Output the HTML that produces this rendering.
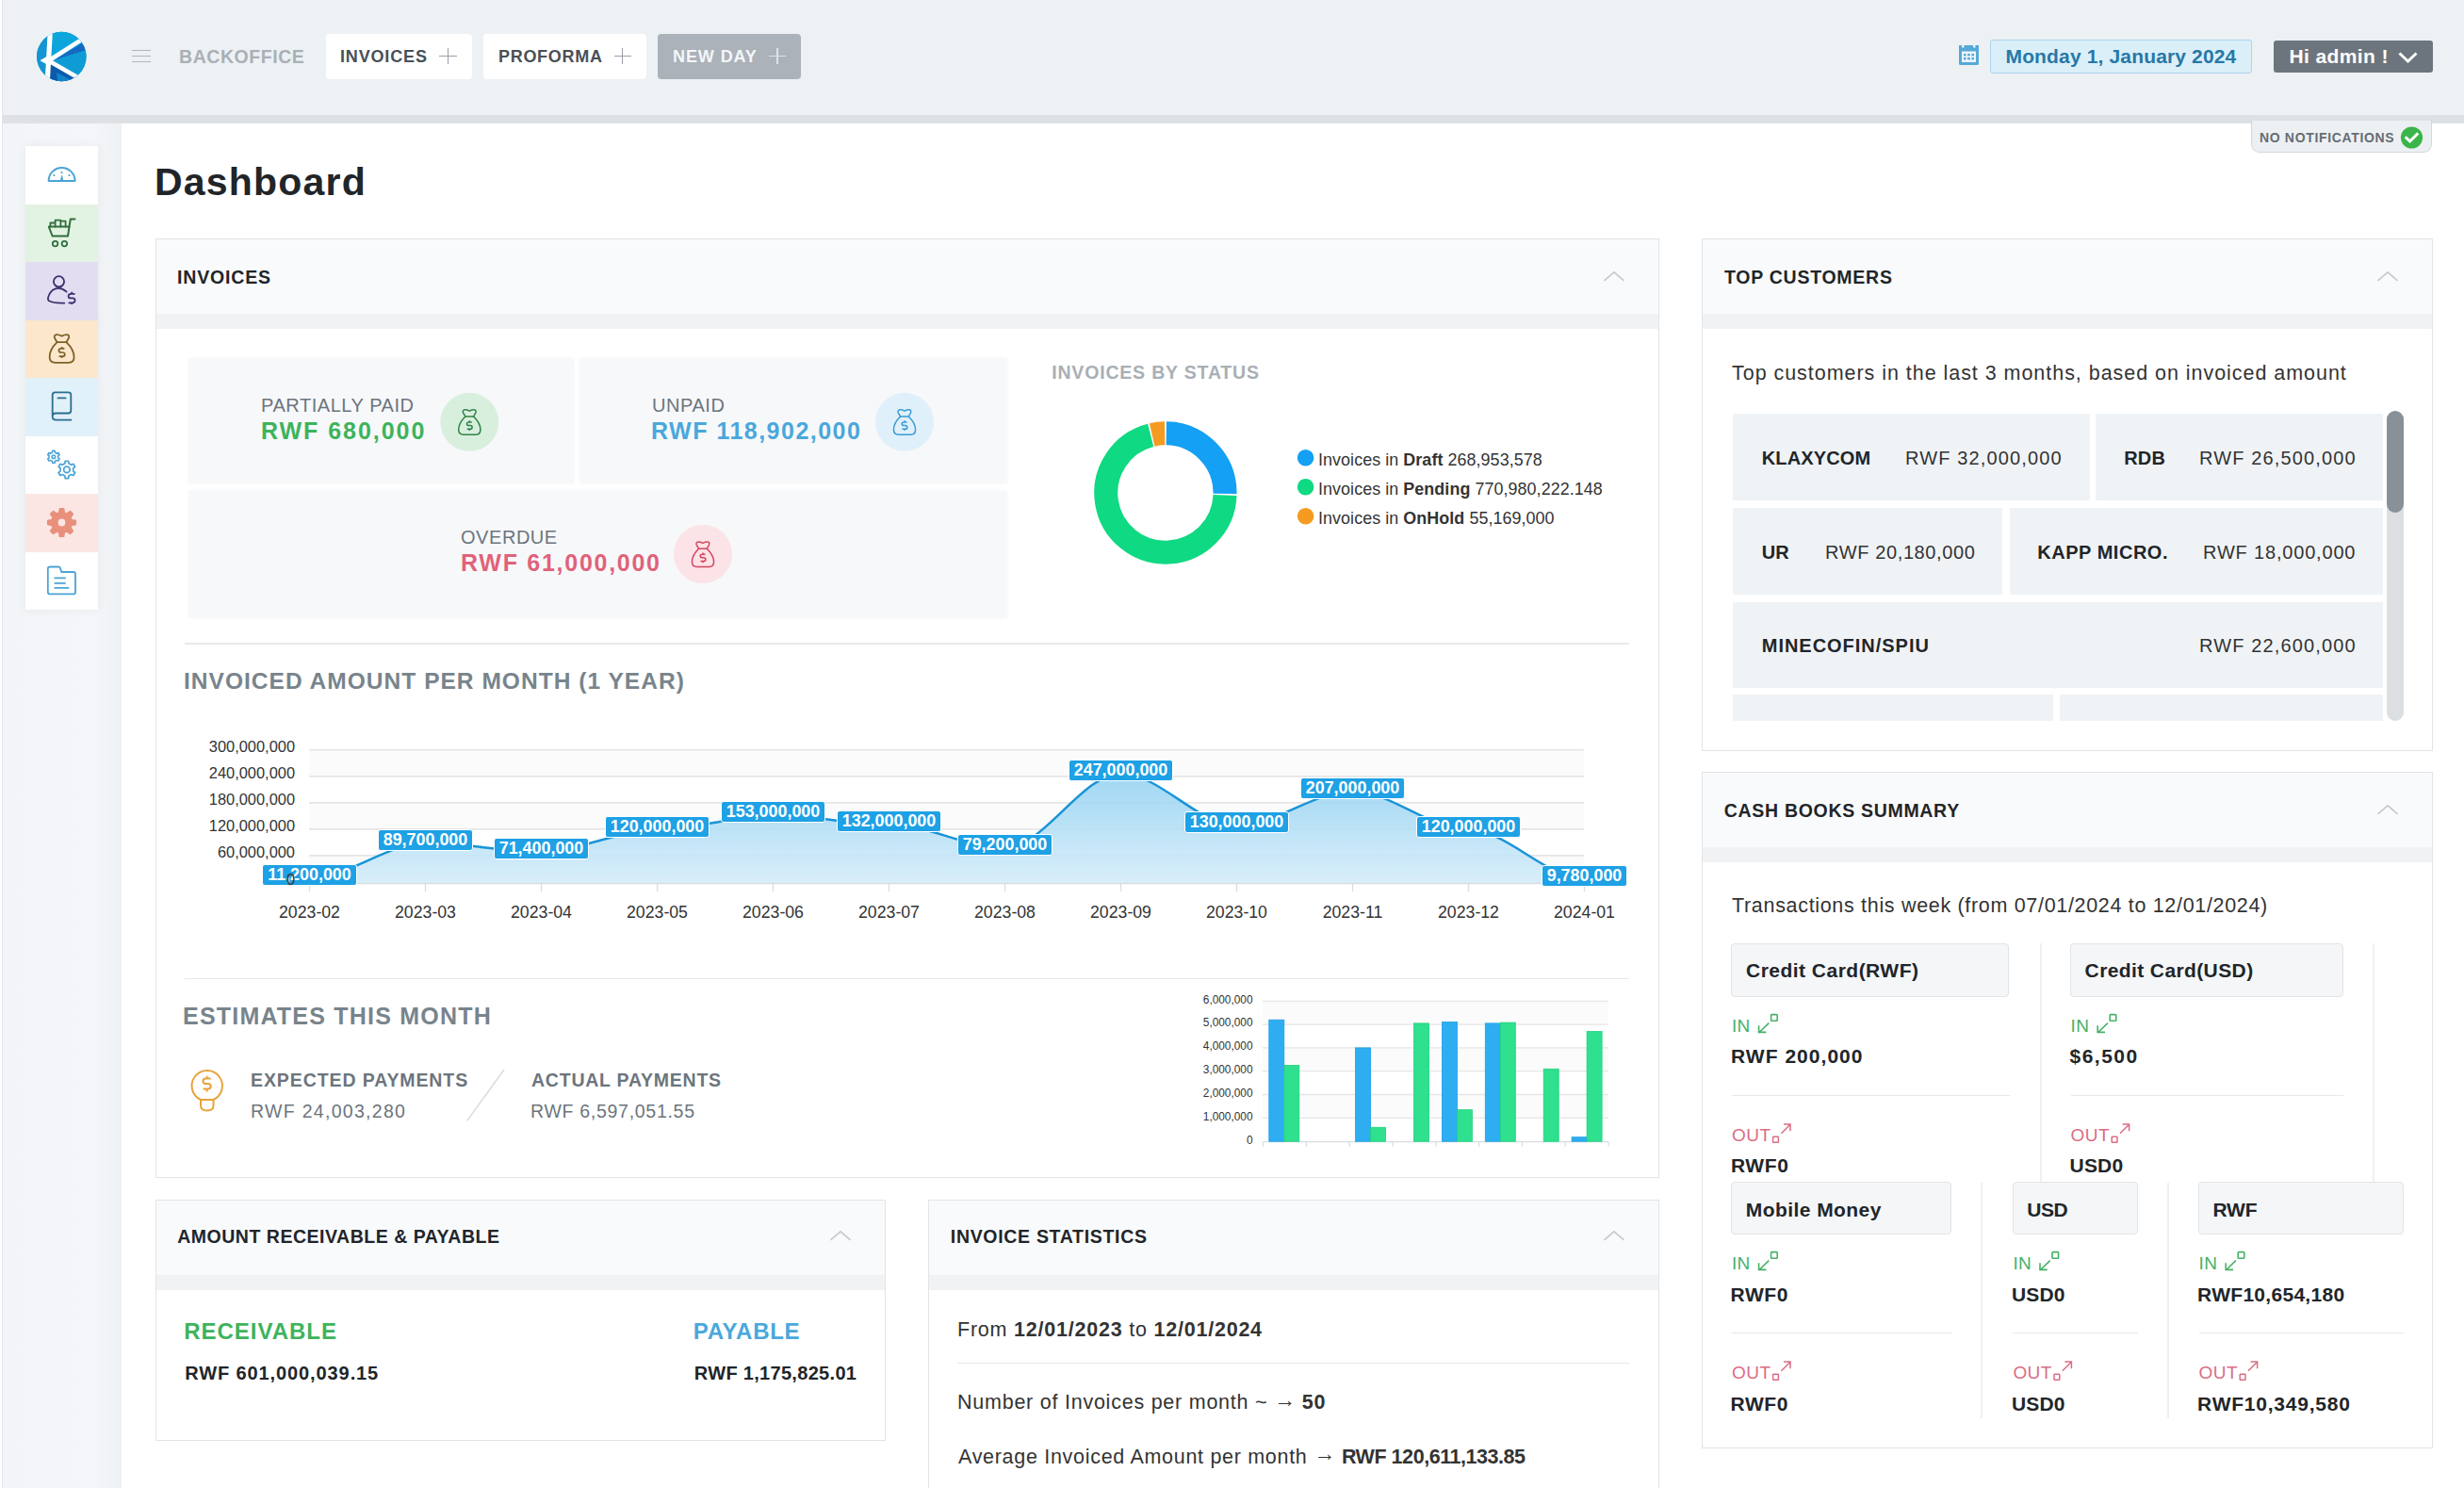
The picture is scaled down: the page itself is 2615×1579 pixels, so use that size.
<!DOCTYPE html>
<html><head><meta charset="utf-8">
<style>
*{box-sizing:border-box;margin:0;padding:0}
html,body{width:2615px;height:1579px;overflow:hidden;background:#fff}
body{position:relative;font-family:"Liberation Sans",sans-serif;color:#212529}
.a{position:absolute}
.t{position:absolute;line-height:1;white-space:nowrap}
.b{font-weight:700}
svg{position:absolute;overflow:visible}
.card{position:absolute;border:1px solid #e2e4e7;background:#fff}
.ch{position:absolute;left:0;right:0;top:0;height:79px;background:#f9fafb}
.cs{position:absolute;left:0;right:0;top:79px;height:16px;background:#f1f2f4}
.ct{position:absolute;line-height:1;white-space:nowrap;font-weight:700;font-size:19.5px;letter-spacing:0.6px;color:#212529}
</style></head><body>
<!-- header -->
<div class="a" style="left:0;top:0;width:2615px;height:122px;background:#edf1f4"></div>
<div class="a" style="left:2px;top:0;width:1px;height:1579px;background:#e1e4e8"></div>
<div class="a" style="left:0;top:0;width:2px;height:1579px;background:#fff"></div>
<div class="a" style="left:3px;top:122px;width:2612px;height:9px;background:#dde1e4"></div>
<!-- sidebar bg -->
<div class="a" style="left:3px;top:131px;width:126px;height:1448px;background:linear-gradient(to right,#f2f5f8 0%,#f4f6f9 75%,#eef1f3 100%)"></div>

<!-- logo -->
<svg style="left:0;top:0" width="120" height="120" viewBox="0 0 120 120">
 <defs><clipPath id="lc"><circle cx="65.3" cy="60" r="26.3"/></clipPath></defs>
 <g clip-path="url(#lc)">
  <rect x="38" y="33" width="55" height="55" fill="#1197d4"/>
  <polygon points="55,30 95,30 95,42 55,64" fill="#0ca6dd"/>
  <polygon points="57,64 95,41 95,52" fill="#1669c2"/>
  <polygon points="57,64 95,52 95,90 80,82" fill="#0f9bd3"/>
  <polygon points="53,67 82,82 60,95 52,95" fill="#0c5aaa"/>
  <polygon points="60,77 76,85 62,92" fill="#1183c8"/>
  <polygon points="30,30 51,30 47,95 30,95" fill="#1595d1"/>
  <line x1="53.6" y1="28" x2="49.8" y2="95" stroke="#fff" stroke-width="5.2"/>
  <line x1="53.5" y1="63.3" x2="92" y2="38.6" stroke="#fff" stroke-width="4.6"/>
  <line x1="53.5" y1="65.5" x2="86" y2="84.2" stroke="#fff" stroke-width="4.6"/>
  <polygon points="42.4,64.2 50,59.8 50,68.4" fill="#fff"/>
 </g>
</svg>
<!-- hamburger -->
<div class="a" style="left:140px;top:53px;width:20px;height:1.3px;background:#b1b6bb"></div>
<div class="a" style="left:140px;top:59px;width:20px;height:1.3px;background:#b1b6bb"></div>
<div class="a" style="left:140px;top:65px;width:20px;height:1.3px;background:#b1b6bb"></div>
<div class="t b" style="left:190px;top:50.5px;font-size:19.5px;letter-spacing:0.56px;color:#a9b0b6">BACKOFFICE</div>
<!-- tabs -->
<div class="a" style="left:346px;top:36px;width:155px;height:48px;background:#fff;border-radius:4px"></div>
<div class="t b" style="left:361px;top:50.8px;font-size:18px;letter-spacing:0.84px;color:#495057">INVOICES</div>
<div class="a" style="left:466px;top:58.5px;width:18.5px;height:1.4px;background:#9aa0a6"></div>
<div class="a" style="left:474.5px;top:50.5px;width:1.4px;height:17px;background:#9aa0a6"></div>
<div class="a" style="left:513px;top:36px;width:172.5px;height:48px;background:#fff;border-radius:4px"></div>
<div class="t b" style="left:529px;top:50.8px;font-size:18px;letter-spacing:0.7px;color:#495057">PROFORMA</div>
<div class="a" style="left:651.5px;top:58.5px;width:18.5px;height:1.4px;background:#9aa0a6"></div>
<div class="a" style="left:660px;top:50.5px;width:1.4px;height:17px;background:#9aa0a6"></div>
<div class="a" style="left:698px;top:36px;width:152px;height:48px;background:#abb2b9;border-radius:4px"></div>
<div class="t b" style="left:714px;top:50.8px;font-size:18px;letter-spacing:0.92px;color:#f4f6f8">NEW DAY</div>
<div class="a" style="left:816px;top:58.5px;width:18px;height:1.4px;background:#dfe3e6"></div>
<div class="a" style="left:824.3px;top:50.5px;width:1.4px;height:17px;background:#dfe3e6"></div>
<!-- calendar -->
<svg style="left:2079px;top:48px" width="21" height="21" viewBox="0 0 21 21">
 <path d="M0 0H3V2.5H5.5V0H15V2.5H17.5V0H21V19.5Q21 21 19.5 21H1.5Q0 21 0 19.5Z" fill="#56a9d8"/>
 <rect x="3" y="6.5" width="15" height="11.5" fill="#edf6fb"/>
 <rect x="5" y="9" width="2.6" height="2.4" fill="#56a9d8"/><rect x="9.2" y="9" width="2.6" height="2.4" fill="#56a9d8"/><rect x="13.4" y="9" width="2.6" height="2.4" fill="#56a9d8"/>
 <rect x="5" y="13" width="2.6" height="2.4" fill="#56a9d8"/><rect x="9.2" y="13" width="2.6" height="2.4" fill="#56a9d8"/><rect x="13.4" y="13" width="2.6" height="2.4" fill="#56a9d8"/>
</svg>
<div class="a" style="left:2112px;top:42px;width:278px;height:36px;background:#dbeff9;border:1px solid #a9d5ee;border-radius:3px"></div>
<div class="t b" style="left:2128.5px;top:48.5px;font-size:21px;letter-spacing:0.15px;color:#2678a8">Monday 1, January 2024</div>
<div class="a" style="left:2413px;top:43px;width:169px;height:34px;background:#6c757d;border-radius:3px"></div>
<div class="t b" style="left:2429.5px;top:48.5px;font-size:21px;letter-spacing:0.38px;color:#fff">Hi admin !</div>
<svg style="left:2545px;top:55px" width="21" height="12" viewBox="0 0 21 12"><path d="M1.5 1.5L10.5 10L19.5 1.5" fill="none" stroke="#fff" stroke-width="3"/></svg>
<!-- sidebar -->
<div class="a" style="left:27px;top:155px;width:77px;height:492px;box-shadow:0 0 10px rgba(0,0,0,0.06)"></div>
<div class="a" style="left:27px;top:155px;width:77px;height:61.5px;background:#ffffff"></div>
<div class="a" style="left:27px;top:216.5px;width:77px;height:61.5px;background:#e3f3e3"></div>
<div class="a" style="left:27px;top:278px;width:77px;height:61.5px;background:#e2ddf1"></div>
<div class="a" style="left:27px;top:339.5px;width:77px;height:61.5px;background:#fce7cc"></div>
<div class="a" style="left:27px;top:401px;width:77px;height:61.5px;background:#e1f1fa"></div>
<div class="a" style="left:27px;top:462.5px;width:77px;height:61.5px;background:#ffffff"></div>
<div class="a" style="left:27px;top:524px;width:77px;height:61.5px;background:#fbe6e3"></div>
<div class="a" style="left:27px;top:585.5px;width:77px;height:61.5px;background:#ffffff"></div>
<svg style="left:0;top:0" width="120" height="660" viewBox="0 0 120 660" fill="none" stroke-linecap="round" stroke-linejoin="round">
<path d="M51.6 192 A14 14 0 0 1 79.6 192 Z" stroke="#4ba3d6" stroke-width="2"/>
<path d="M64.4 192 L65.6 186.5 L66.8 192Z" fill="#4ba3d6" stroke="#4ba3d6" stroke-width="1"/>
<circle cx="57.4" cy="186" r="1.1" fill="#4ba3d6" stroke="none"/><circle cx="65.6" cy="183" r="1.1" fill="#4ba3d6" stroke="none"/><circle cx="73.5" cy="186" r="1.1" fill="#4ba3d6" stroke="none"/>
<path d="M51.8 240.6 H73.5 L72 250.5 H55.6 Z" stroke="#2f6f3e" stroke-width="2"/>
<path d="M73.5 240.6 L74.8 232.5 H79.5" stroke="#2f6f3e" stroke-width="2"/>
<path d="M53.4 240.6 V236.5 H58.6 V240.6 M58.6 236.5 V233.6 H64.4 V240.6 M64.4 234.7 H69.6 V240.6" stroke="#2f6f3e" stroke-width="1.8"/>
<circle cx="58.6" cy="258.6" r="2.8" stroke="#2f6f3e" stroke-width="1.8"/><circle cx="68.4" cy="258.6" r="2.8" stroke="#2f6f3e" stroke-width="1.8"/>
<circle cx="62.5" cy="298.8" r="5.6" stroke="#3a2f6e" stroke-width="1.8"/>
<path d="M70.6 309.6 Q66.5 305.8 62.3 305.8 Q55 305.8 51.8 313.5 Q50 318 52 319.3 Q57 322 68.3 321.6" stroke="#3a2f6e" stroke-width="1.8"/>
<path d="M79.5 311.8 H75.3 Q72.6 311.8 72.6 314.4 Q72.6 316.4 75.3 316.4 H77 Q79.6 316.4 79.6 318.8 Q79.6 321.3 77 321.3 H72.6 M76.2 309.8 V311.8 M76.2 321.3 V323" stroke="#3a2f6e" stroke-width="1.7" stroke-linecap="butt"/>
<path d="M60.6 363.2 L57.9 358.5 Q57 355.6 60 355.2 Q62.5 355 65.6 356.6 Q68.8 355 71.2 355.2 Q74 355.6 73 358.5 L70.4 363.2 Z" stroke="#7f6127" stroke-width="1.8"/>
<path d="M60.6 363.2 Q52.5 371 52.6 379 Q52.8 384.8 58.5 384.8 H72.8 Q78.6 384.8 78.6 379 Q78.6 371 70.4 363.2" stroke="#7f6127" stroke-width="1.8"/>
<path d="M68.4 369.9 H65 Q62.4 369.9 62.4 372 Q62.4 374 65 374 H66.3 Q68.8 374 68.8 376.2 Q68.8 378.2 66.3 378.2 H62.6 M65.6 368 V369.9 M65.6 378.2 V380" stroke="#7f6127" stroke-width="1.7" stroke-linecap="butt"/>
<path d="M55.7 442 V419 Q55.7 416.3 58.4 416.3 H72.6 Q75.3 416.3 75.3 419 V435.8 Q75.3 438.5 72.6 438.5 H59.2 Q55.7 438.5 55.7 442 Q55.7 445.6 59.5 445.6 H75.5" stroke="#2b6e8e" stroke-width="1.8"/>
<path d="M61.5 422.4 H69.6" stroke="#2b6e8e" stroke-width="1.8"/>
<path d="M55.48 480.11 L55.66 478.32 L58.14 478.32 L58.32 480.11 L60.25 481.23 L61.90 480.49 L63.13 482.63 L61.67 483.68 L61.67 485.92 L63.13 486.97 L61.90 489.11 L60.25 488.37 L58.32 489.49 L58.14 491.28 L55.66 491.28 L55.48 489.49 L53.55 488.37 L51.90 489.11 L50.67 486.97 L52.13 485.92 L52.13 483.68 L50.67 482.63 L51.90 480.49 L53.55 481.23Z" stroke="#4ba3d6" stroke-width="1.6"/>
<circle cx="56.9" cy="484.8" r="1.8" stroke="#4ba3d6" stroke-width="1.5"/>
<path d="M68.88 491.70 L69.16 489.26 L72.64 489.26 L72.92 491.70 L75.69 493.30 L77.94 492.32 L79.68 495.34 L77.72 496.80 L77.72 500.00 L79.68 501.46 L77.94 504.48 L75.69 503.50 L72.92 505.10 L72.64 507.54 L69.16 507.54 L68.88 505.10 L66.11 503.50 L63.86 504.48 L62.12 501.46 L64.08 500.00 L64.08 496.80 L62.12 495.34 L63.86 492.32 L66.11 493.30Z" stroke="#4ba3d6" stroke-width="1.7"/>
<circle cx="70.9" cy="498.4" r="3.3" stroke="#4ba3d6" stroke-width="1.7"/>
<path d="M63.03 544.19 L63.67 540.02 L67.33 540.02 L67.97 544.19 L71.04 545.46 L74.45 542.96 L77.04 545.55 L74.54 548.96 L75.81 552.03 L79.98 552.67 L79.98 556.33 L75.81 556.97 L74.54 560.04 L77.04 563.45 L74.45 566.04 L71.04 563.54 L67.97 564.81 L67.33 568.98 L63.67 568.98 L63.03 564.81 L59.96 563.54 L56.55 566.04 L53.96 563.45 L56.46 560.04 L55.19 556.97 L51.02 556.33 L51.02 552.67 L55.19 552.03 L56.46 548.96 L53.96 545.55 L56.55 542.96 L59.96 545.46Z" fill="#e8907b" stroke="#e8907b" stroke-width="2.2" stroke-linejoin="round"/>
<circle cx="65.5" cy="554.5" r="3.9" fill="#fbe6e3"/>
<path d="M50.8 603.6 Q50.8 601.5 53 601.5 H62.6 Q63.4 601.5 63.7 602.4 L65.3 607 H77.8 Q80 607 80 609.2 V628.2 Q80 630.4 77.8 630.4 H53 Q50.8 630.4 50.8 628.2 Z" stroke="#4ba3d6" stroke-width="1.8"/>
<path d="M58.3 613.4 H69 M58.3 618.8 H69 M58.3 623.9 H72.6" stroke="#4ba3d6" stroke-width="1.8"/>
</svg>
<!-- /sidebar -->

<!-- title -->
<div class="t b" style="left:164px;top:172.9px;font-size:41px;letter-spacing:1.2px;color:#212529">Dashboard</div>
<!-- notifications -->
<div class="a" style="left:2388.5px;top:128px;width:192px;height:33.5px;background:#edf0f3;border:1px solid #d3d7db;border-top:none;border-radius:0 0 9px 9px"></div>
<div class="t b" style="left:2398px;top:139.2px;font-size:14px;letter-spacing:0.66px;color:#656d74">NO NOTIFICATIONS</div>
<svg style="left:2547px;top:134px" width="25" height="25" viewBox="0 0 25 25"><circle cx="12.5" cy="12" r="11.6" fill="#3bb54a"/><path d="M6.8 12.3 L10.6 16 L18.2 8.4" fill="none" stroke="#fff" stroke-width="3" stroke-linecap="square"/></svg>

<!-- INVOICES card -->
<div class="card" style="left:165px;top:253px;width:1596px;height:997px">
 <div class="ch"></div><div class="cs"></div>
</div>
<div class="ct" style="left:188px;top:284.5px;letter-spacing:0.83px">INVOICES</div>
<svg style="left:1701px;top:287px" width="24" height="12" viewBox="0 0 24 12"><path d="M1.5 10.8 L12 1.8 L22.5 10.8" fill="none" stroke="#c6c9cc" stroke-width="1.6"/></svg>

<!-- TOP CUSTOMERS card -->
<div class="card" style="left:1806px;top:253px;width:776px;height:544px">
 <div class="ch"></div><div class="cs"></div>
</div>
<div class="ct" style="left:1830px;top:284.5px;letter-spacing:0.74px">TOP CUSTOMERS</div>
<svg style="left:2521.5px;top:287px" width="24" height="12" viewBox="0 0 24 12"><path d="M1.5 10.8 L12 1.8 L22.5 10.8" fill="none" stroke="#c6c9cc" stroke-width="1.6"/></svg>

<!-- CASH BOOKS card -->
<div class="card" style="left:1806px;top:819px;width:776px;height:718px">
 <div class="ch"></div><div class="cs"></div>
</div>
<div class="ct" style="left:1829.8px;top:851.3px;letter-spacing:0.69px">CASH BOOKS SUMMARY</div>
<svg style="left:2521.5px;top:852.5px" width="24" height="12" viewBox="0 0 24 12"><path d="M1.5 10.8 L12 1.8 L22.5 10.8" fill="none" stroke="#c6c9cc" stroke-width="1.6"/></svg>

<!-- AR card -->
<div class="card" style="left:165px;top:1272.5px;width:775px;height:256px">
 <div class="ch"></div><div class="cs"></div>
</div>
<div class="ct" style="left:188.2px;top:1303px;letter-spacing:0.52px">AMOUNT RECEIVABLE &amp; PAYABLE</div>
<svg style="left:880px;top:1305px" width="24" height="12" viewBox="0 0 24 12"><path d="M1.5 10.8 L12 1.8 L22.5 10.8" fill="none" stroke="#c6c9cc" stroke-width="1.6"/></svg>

<!-- INVOICE STATISTICS card -->
<div class="card" style="left:985px;top:1272.5px;width:776px;height:400px">
 <div class="ch"></div><div class="cs"></div>
</div>
<div class="ct" style="left:1008.8px;top:1303.3px;letter-spacing:0.69px">INVOICE STATISTICS</div>
<svg style="left:1701px;top:1305px" width="24" height="12" viewBox="0 0 24 12"><path d="M1.5 10.8 L12 1.8 L22.5 10.8" fill="none" stroke="#c6c9cc" stroke-width="1.6"/></svg>
<!-- INV-CONTENT -->
<div class="a" style="left:200px;top:380px;width:409px;height:133px;background:#f7f8fa;box-shadow:0 0 4px rgba(0,0,0,0.035)"></div>
<div class="a" style="left:614.5px;top:380px;width:454.5px;height:133px;background:#f7f8fa;box-shadow:0 0 4px rgba(0,0,0,0.035)"></div>
<div class="a" style="left:200px;top:520.5px;width:869px;height:135.5px;background:#f7f8fa;box-shadow:0 0 4px rgba(0,0,0,0.035)"></div>
<div class="t" style="left:277px;top:420.2px;font-size:20px;letter-spacing:0.55px;color:#6c757d;">PARTIALLY PAID</div>
<div class="t" style="left:277px;top:445.1px;font-size:25px;font-weight:700;letter-spacing:1.95px;color:#3db35b;">RWF 680,000</div>
<div class="t" style="left:692px;top:420.2px;font-size:20px;letter-spacing:0.55px;color:#6c757d;">UNPAID</div>
<div class="t" style="left:691px;top:445.1px;font-size:25px;font-weight:700;letter-spacing:1.49px;color:#4aa7dc;">RWF 118,902,000</div>
<div class="t" style="left:489px;top:560.1px;font-size:20px;letter-spacing:0.55px;color:#6c757d;">OVERDUE</div>
<div class="t" style="left:489px;top:584.7px;font-size:25px;font-weight:700;letter-spacing:1.73px;color:#e0627a;">RWF 61,000,000</div>
<svg style="left:0;top:0" width="2615" height="1579" viewBox="0 0 2615 1579">
<defs><symbol id="bag" viewBox="-1 -1 28 32" overflow="visible"><g fill="none" stroke-linecap="round" stroke-linejoin="round">
<path d="M8 8.2 L5.3 3.5 Q4.4 0.6 7.4 0.2 Q9.9 0 13 1.6 Q16.2 0 18.6 0.2 Q21.4 0.6 20.4 3.5 L17.8 8.2 Z"/>
<path d="M8 8.2 Q-0.1 16 0 24 Q0.2 29.8 5.9 29.8 H20.2 Q26 29.8 26 24 Q26 16 17.8 8.2"/>
<path d="M15.8 14.9 H12.4 Q9.8 14.9 9.8 17 Q9.8 19 12.4 19 H13.7 Q16.2 19 16.2 21.2 Q16.2 23.2 13.7 23.2 H10 M13 13 V14.9 M13 23.2 V25" stroke-linecap="butt"/>
</g></symbol></defs>
<circle cx="498.3" cy="447.8" r="31" fill="#d9efde"/>
<use href="#bag" x="485.8" y="433.8" width="25" height="28.5" stroke="#2f8446" stroke-width="1.7"/>
<circle cx="960" cy="447.8" r="31" fill="#e0f0fa"/>
<use href="#bag" x="947.5" y="433.8" width="25" height="28.5" stroke="#3a9bd5" stroke-width="1.7"/>
<circle cx="746" cy="588" r="31" fill="#fbe3e7"/>
<use href="#bag" x="733.5" y="574" width="25" height="28.5" stroke="#d8445e" stroke-width="1.7"/>
<path d="M1237.78 459.86 A63.15 63.15 0 0 1 1300.04 523.88" fill="none" stroke="#14a0f4" stroke-width="25"/>
<path d="M1300.00 525.42 A63.15 63.15 0 1 1 1221.20 461.83" fill="none" stroke="#0fd982" stroke-width="25"/>
<path d="M1222.69 461.47 A63.15 63.15 0 0 1 1236.13 459.85" fill="none" stroke="#f59b21" stroke-width="25"/>
<circle cx="1385.6" cy="485.7" r="8.8" fill="#14a0f4"/>
<circle cx="1385.6" cy="516.7" r="8.8" fill="#0fd982"/>
<circle cx="1385.6" cy="547.7" r="8.8" fill="#f59b21"/>
<rect x="328" y="796" width="1353" height="28" fill="#fbfbfb"/>
<rect x="328" y="852" width="1353" height="28" fill="#fbfbfb"/>
<rect x="328" y="908" width="1353" height="29" fill="#fbfbfb"/>
<line x1="328" y1="795.8" x2="1681" y2="795.8" stroke="#e6e6e6" stroke-width="1.6"/>
<line x1="328" y1="823.9" x2="1681" y2="823.9" stroke="#e6e6e6" stroke-width="1.6"/>
<line x1="328" y1="851.9" x2="1681" y2="851.9" stroke="#e6e6e6" stroke-width="1.6"/>
<line x1="328" y1="879.9" x2="1681" y2="879.9" stroke="#e6e6e6" stroke-width="1.6"/>
<line x1="328" y1="907.9" x2="1681" y2="907.9" stroke="#e6e6e6" stroke-width="1.6"/>
<defs><linearGradient id="ag" x1="0" y1="0" x2="0" y2="1"><stop offset="0" stop-color="#8fd0f2"/><stop offset="1" stop-color="#d3ecf9"/></linearGradient></defs>
<path d="M328.50 931.74 C369.50 931.74 410.50 894.84 451.50 894.84 C492.50 894.84 533.50 903.44 574.50 903.44 C615.50 903.44 656.50 880.60 697.50 880.60 C738.50 880.60 779.50 865.09 820.50 865.09 C861.50 865.09 902.50 874.96 943.50 874.96 C984.50 874.96 1025.50 899.78 1066.50 899.78 C1107.50 899.78 1148.50 820.91 1189.50 820.91 C1230.50 820.91 1271.50 875.90 1312.50 875.90 C1353.50 875.90 1394.50 839.71 1435.50 839.71 C1476.50 839.71 1517.50 880.60 1558.50 880.60 C1599.50 880.60 1640.50 932.40 1681.50 932.40 L1681.5 937.0 L328.5 937.0 Z" fill="url(#ag)" fill-opacity="0.85"/>
<path d="M328.50 931.74 C369.50 931.74 410.50 894.84 451.50 894.84 C492.50 894.84 533.50 903.44 574.50 903.44 C615.50 903.44 656.50 880.60 697.50 880.60 C738.50 880.60 779.50 865.09 820.50 865.09 C861.50 865.09 902.50 874.96 943.50 874.96 C984.50 874.96 1025.50 899.78 1066.50 899.78 C1107.50 899.78 1148.50 820.91 1189.50 820.91 C1230.50 820.91 1271.50 875.90 1312.50 875.90 C1353.50 875.90 1394.50 839.71 1435.50 839.71 C1476.50 839.71 1517.50 880.60 1558.50 880.60 C1599.50 880.60 1640.50 932.40 1681.50 932.40" fill="none" stroke="#1994d6" stroke-width="2.5" stroke-linejoin="round"/>
<line x1="328" y1="937.5" x2="1681" y2="937.5" stroke="#d8dde2" stroke-width="1.5"/>
<line x1="328.5" y1="937" x2="328.5" y2="946" stroke="#d8dde2" stroke-width="1.3"/>
<line x1="451.5" y1="937" x2="451.5" y2="946" stroke="#d8dde2" stroke-width="1.3"/>
<line x1="574.5" y1="937" x2="574.5" y2="946" stroke="#d8dde2" stroke-width="1.3"/>
<line x1="697.5" y1="937" x2="697.5" y2="946" stroke="#d8dde2" stroke-width="1.3"/>
<line x1="820.5" y1="937" x2="820.5" y2="946" stroke="#d8dde2" stroke-width="1.3"/>
<line x1="943.5" y1="937" x2="943.5" y2="946" stroke="#d8dde2" stroke-width="1.3"/>
<line x1="1066.5" y1="937" x2="1066.5" y2="946" stroke="#d8dde2" stroke-width="1.3"/>
<line x1="1189.5" y1="937" x2="1189.5" y2="946" stroke="#d8dde2" stroke-width="1.3"/>
<line x1="1312.5" y1="937" x2="1312.5" y2="946" stroke="#d8dde2" stroke-width="1.3"/>
<line x1="1435.5" y1="937" x2="1435.5" y2="946" stroke="#d8dde2" stroke-width="1.3"/>
<line x1="1558.5" y1="937" x2="1558.5" y2="946" stroke="#d8dde2" stroke-width="1.3"/>
<line x1="1681.5" y1="937" x2="1681.5" y2="946" stroke="#d8dde2" stroke-width="1.3"/>
</svg>
<div class="t" style="left:113px;width:200px;text-align:right;top:783.9px;font-size:16.4px;color:#333">300,000,000</div>
<div class="t" style="left:113px;width:200px;text-align:right;top:812.0px;font-size:16.4px;color:#333">240,000,000</div>
<div class="t" style="left:113px;width:200px;text-align:right;top:840.0px;font-size:16.4px;color:#333">180,000,000</div>
<div class="t" style="left:113px;width:200px;text-align:right;top:868.0px;font-size:16.4px;color:#333">120,000,000</div>
<div class="t" style="left:113px;width:200px;text-align:right;top:896.0px;font-size:16.4px;color:#333">60,000,000</div>
<div class="t" style="left:268.5px;width:120px;text-align:center;top:960.0px;font-size:17.7px;color:#333">2023-02</div>
<div class="t" style="left:391.5px;width:120px;text-align:center;top:960.0px;font-size:17.7px;color:#333">2023-03</div>
<div class="t" style="left:514.5px;width:120px;text-align:center;top:960.0px;font-size:17.7px;color:#333">2023-04</div>
<div class="t" style="left:637.5px;width:120px;text-align:center;top:960.0px;font-size:17.7px;color:#333">2023-05</div>
<div class="t" style="left:760.5px;width:120px;text-align:center;top:960.0px;font-size:17.7px;color:#333">2023-06</div>
<div class="t" style="left:883.5px;width:120px;text-align:center;top:960.0px;font-size:17.7px;color:#333">2023-07</div>
<div class="t" style="left:1006.5px;width:120px;text-align:center;top:960.0px;font-size:17.7px;color:#333">2023-08</div>
<div class="t" style="left:1129.5px;width:120px;text-align:center;top:960.0px;font-size:17.7px;color:#333">2023-09</div>
<div class="t" style="left:1252.5px;width:120px;text-align:center;top:960.0px;font-size:17.7px;color:#333">2023-10</div>
<div class="t" style="left:1375.5px;width:120px;text-align:center;top:960.0px;font-size:17.7px;color:#333">2023-11</div>
<div class="t" style="left:1498.5px;width:120px;text-align:center;top:960.0px;font-size:17.7px;color:#333">2023-12</div>
<div class="t" style="left:1621.5px;width:120px;text-align:center;top:960.0px;font-size:17.7px;color:#333">2024-01</div>
<div class="t" style="left:258.5px;width:140px;top:917.0px;height:23px;text-align:center"><span style="display:inline-block;height:23px;padding:0 5px;background:#1ea1e5;border:1px solid #fff;border-radius:3px;box-sizing:border-box;line-height:21px;font-size:17.9px;font-weight:700;color:#fff">11,200,000</span></div>
<div class="t" style="left:381.5px;width:140px;top:880.1px;height:23px;text-align:center"><span style="display:inline-block;height:23px;padding:0 5px;background:#1ea1e5;border:1px solid #fff;border-radius:3px;box-sizing:border-box;line-height:21px;font-size:17.9px;font-weight:700;color:#fff">89,700,000</span></div>
<div class="t" style="left:504.5px;width:140px;top:888.7px;height:23px;text-align:center"><span style="display:inline-block;height:23px;padding:0 5px;background:#1ea1e5;border:1px solid #fff;border-radius:3px;box-sizing:border-box;line-height:21px;font-size:17.9px;font-weight:700;color:#fff">71,400,000</span></div>
<div class="t" style="left:627.5px;width:140px;top:865.9px;height:23px;text-align:center"><span style="display:inline-block;height:23px;padding:0 5px;background:#1ea1e5;border:1px solid #fff;border-radius:3px;box-sizing:border-box;line-height:21px;font-size:17.9px;font-weight:700;color:#fff">120,000,000</span></div>
<div class="t" style="left:750.5px;width:140px;top:850.4px;height:23px;text-align:center"><span style="display:inline-block;height:23px;padding:0 5px;background:#1ea1e5;border:1px solid #fff;border-radius:3px;box-sizing:border-box;line-height:21px;font-size:17.9px;font-weight:700;color:#fff">153,000,000</span></div>
<div class="t" style="left:873.5px;width:140px;top:860.3px;height:23px;text-align:center"><span style="display:inline-block;height:23px;padding:0 5px;background:#1ea1e5;border:1px solid #fff;border-radius:3px;box-sizing:border-box;line-height:21px;font-size:17.9px;font-weight:700;color:#fff">132,000,000</span></div>
<div class="t" style="left:996.5px;width:140px;top:885.1px;height:23px;text-align:center"><span style="display:inline-block;height:23px;padding:0 5px;background:#1ea1e5;border:1px solid #fff;border-radius:3px;box-sizing:border-box;line-height:21px;font-size:17.9px;font-weight:700;color:#fff">79,200,000</span></div>
<div class="t" style="left:1119.5px;width:140px;top:806.2px;height:23px;text-align:center"><span style="display:inline-block;height:23px;padding:0 5px;background:#1ea1e5;border:1px solid #fff;border-radius:3px;box-sizing:border-box;line-height:21px;font-size:17.9px;font-weight:700;color:#fff">247,000,000</span></div>
<div class="t" style="left:1242.5px;width:140px;top:861.2px;height:23px;text-align:center"><span style="display:inline-block;height:23px;padding:0 5px;background:#1ea1e5;border:1px solid #fff;border-radius:3px;box-sizing:border-box;line-height:21px;font-size:17.9px;font-weight:700;color:#fff">130,000,000</span></div>
<div class="t" style="left:1365.5px;width:140px;top:825.0px;height:23px;text-align:center"><span style="display:inline-block;height:23px;padding:0 5px;background:#1ea1e5;border:1px solid #fff;border-radius:3px;box-sizing:border-box;line-height:21px;font-size:17.9px;font-weight:700;color:#fff">207,000,000</span></div>
<div class="t" style="left:1488.5px;width:140px;top:865.9px;height:23px;text-align:center"><span style="display:inline-block;height:23px;padding:0 5px;background:#1ea1e5;border:1px solid #fff;border-radius:3px;box-sizing:border-box;line-height:21px;font-size:17.9px;font-weight:700;color:#fff">120,000,000</span></div>
<div class="t" style="left:1611.5px;width:140px;top:917.7px;height:23px;text-align:center"><span style="display:inline-block;height:23px;padding:0 5px;background:#1ea1e5;border:1px solid #fff;border-radius:3px;box-sizing:border-box;line-height:21px;font-size:17.9px;font-weight:700;color:#fff">9,780,000</span></div>
<div class="t" style="left:213px;width:100px;text-align:right;top:925.1px;font-size:16.4px;color:#333">0</div>
<div class="a" style="left:196px;top:682px;width:1533px;height:1.5px;background:#e6e8eb"></div>
<div class="a" style="left:196px;top:1037.5px;width:1533px;height:1.5px;background:#e6e8eb"></div>
<div class="t" style="left:1116.2px;top:385.5px;font-size:19.5px;font-weight:700;letter-spacing:0.82px;color:#a8afb5;">INVOICES BY STATUS</div>
<div class="t" style="left:1399px;top:480.4px;font-size:17.9px;letter-spacing:0.07px;color:#333">Invoices in <b>Draft</b> 268,953,578</div>
<div class="t" style="left:1399px;top:511.4px;font-size:17.9px;letter-spacing:0.07px;color:#333">Invoices in <b>Pending</b> 770,980,222.148</div>
<div class="t" style="left:1399px;top:542.4px;font-size:17.9px;letter-spacing:0.07px;color:#333">Invoices in <b>OnHold</b> 55,169,000</div>
<div class="t" style="left:195px;top:711.3px;font-size:24.5px;font-weight:700;letter-spacing:1.03px;color:#78848c;">INVOICED AMOUNT PER MONTH (1 YEAR)</div>
<div class="t" style="left:194px;top:1065.7px;font-size:25px;font-weight:700;letter-spacing:1.21px;color:#78848c;">ESTIMATES THIS MONTH</div>
<div class="t" style="left:266px;top:1136.5px;font-size:19.5px;font-weight:700;letter-spacing:0.91px;color:#6c757d;">EXPECTED PAYMENTS</div>
<div class="t" style="left:266px;top:1169.5px;font-size:19.5px;letter-spacing:1.3px;color:#6c757d;">RWF 24,003,280</div>
<div class="t" style="left:564px;top:1136.5px;font-size:19.5px;font-weight:700;letter-spacing:0.77px;color:#6c757d;">ACTUAL PAYMENTS</div>
<div class="t" style="left:563px;top:1169.5px;font-size:19.5px;letter-spacing:0.71px;color:#6c757d;">RWF 6,597,051.55</div>
<svg style="left:0;top:0" width="2615" height="1579" viewBox="0 0 2615 1579">
<path d="M213 1167 A16.2 16.2 0 1 1 226.5 1167 Z M213 1167 V1173 Q213 1178.5 219.75 1178.5 Q226.5 1178.5 226.5 1173 V1167" fill="none" stroke="#e9a23b" stroke-width="2"/>
<path d="M223.6 1144.6 H218.5 Q215.4 1144.6 215.4 1147.3 Q215.4 1150 218.5 1150 H220.6 Q223.8 1150 223.8 1152.8 Q223.8 1155.6 220.6 1155.6 H215.6 M219.6 1141.8 V1144.6 M219.6 1155.6 V1158.6" fill="none" stroke="#e9a23b" stroke-width="2"/>
<line x1="535" y1="1135" x2="495.6" y2="1189.5" stroke="#dadde0" stroke-width="1.5"/>
<rect x="1340" y="1062.3" width="367" height="24.8" fill="#fbfbfb"/>
<rect x="1340" y="1111.9" width="367" height="24.8" fill="#fbfbfb"/>
<rect x="1340" y="1161.5" width="367" height="24.8" fill="#fbfbfb"/>
<line x1="1340" y1="1062.3" x2="1707" y2="1062.3" stroke="#e6e6e6" stroke-width="1.3"/>
<line x1="1340" y1="1087.1" x2="1707" y2="1087.1" stroke="#e6e6e6" stroke-width="1.3"/>
<line x1="1340" y1="1111.9" x2="1707" y2="1111.9" stroke="#e6e6e6" stroke-width="1.3"/>
<line x1="1340" y1="1136.7" x2="1707" y2="1136.7" stroke="#e6e6e6" stroke-width="1.3"/>
<line x1="1340" y1="1161.5" x2="1707" y2="1161.5" stroke="#e6e6e6" stroke-width="1.3"/>
<line x1="1340" y1="1186.3" x2="1707" y2="1186.3" stroke="#e6e6e6" stroke-width="1.3"/>
<line x1="1340" y1="1211.6" x2="1707" y2="1211.6" stroke="#d8dde2" stroke-width="1.3"/>
<line x1="1340.5" y1="1211" x2="1340.5" y2="1217" stroke="#d8dde2" stroke-width="1.1"/>
<line x1="1386.3" y1="1211" x2="1386.3" y2="1217" stroke="#d8dde2" stroke-width="1.1"/>
<line x1="1432.1" y1="1211" x2="1432.1" y2="1217" stroke="#d8dde2" stroke-width="1.1"/>
<line x1="1478.0" y1="1211" x2="1478.0" y2="1217" stroke="#d8dde2" stroke-width="1.1"/>
<line x1="1523.8" y1="1211" x2="1523.8" y2="1217" stroke="#d8dde2" stroke-width="1.1"/>
<line x1="1569.6" y1="1211" x2="1569.6" y2="1217" stroke="#d8dde2" stroke-width="1.1"/>
<line x1="1615.4" y1="1211" x2="1615.4" y2="1217" stroke="#d8dde2" stroke-width="1.1"/>
<line x1="1661.2" y1="1211" x2="1661.2" y2="1217" stroke="#d8dde2" stroke-width="1.1"/>
<line x1="1707.1" y1="1211" x2="1707.1" y2="1217" stroke="#d8dde2" stroke-width="1.1"/>
<rect x="1346.8" y="1082.2" width="16" height="129.0" fill="#2eaef1" stroke="#1b9ee6" stroke-width="0.8"/>
<rect x="1362.8" y="1130.5" width="16" height="80.7" fill="#2fe08f" stroke="#1ed17d" stroke-width="0.8"/>
<rect x="1438.6" y="1111.9" width="16" height="99.3" fill="#2eaef1" stroke="#1b9ee6" stroke-width="0.8"/>
<rect x="1454.6" y="1196.3" width="16" height="14.9" fill="#2fe08f" stroke="#1ed17d" stroke-width="0.8"/>
<rect x="1500.5" y="1085.9" width="16" height="125.3" fill="#2fe08f" stroke="#1ed17d" stroke-width="0.8"/>
<rect x="1530.4" y="1084.6" width="16" height="126.6" fill="#2eaef1" stroke="#1b9ee6" stroke-width="0.8"/>
<rect x="1546.4" y="1177.7" width="16" height="33.5" fill="#2fe08f" stroke="#1ed17d" stroke-width="0.8"/>
<rect x="1576.3" y="1085.9" width="16" height="125.3" fill="#2eaef1" stroke="#1b9ee6" stroke-width="0.8"/>
<rect x="1592.3" y="1085.1" width="16" height="126.1" fill="#2fe08f" stroke="#1ed17d" stroke-width="0.8"/>
<rect x="1638.2" y="1134.3" width="16" height="76.9" fill="#2fe08f" stroke="#1ed17d" stroke-width="0.8"/>
<rect x="1668.1" y="1206.7" width="16" height="4.5" fill="#2eaef1" stroke="#1b9ee6" stroke-width="0.8"/>
<rect x="1684.1" y="1094.6" width="16" height="116.6" fill="#2fe08f" stroke="#1ed17d" stroke-width="0.8"/>
</svg>
<div class="t" style="left:1229.5px;width:100px;text-align:right;top:1055.6px;font-size:11.85px;color:#333">6,000,000</div>
<div class="t" style="left:1229.5px;width:100px;text-align:right;top:1080.4px;font-size:11.85px;color:#333">5,000,000</div>
<div class="t" style="left:1229.5px;width:100px;text-align:right;top:1105.2px;font-size:11.85px;color:#333">4,000,000</div>
<div class="t" style="left:1229.5px;width:100px;text-align:right;top:1130.0px;font-size:11.85px;color:#333">3,000,000</div>
<div class="t" style="left:1229.5px;width:100px;text-align:right;top:1154.8px;font-size:11.85px;color:#333">2,000,000</div>
<div class="t" style="left:1229.5px;width:100px;text-align:right;top:1179.6px;font-size:11.85px;color:#333">1,000,000</div>
<div class="t" style="left:1229.5px;width:100px;text-align:right;top:1204.5px;font-size:11.85px;color:#333">0</div>
<!-- /INV-CONTENT -->
<!-- RIGHT-CONTENT -->
<div class="t" style="left:195.2px;top:1400.9px;font-size:24px;font-weight:700;letter-spacing:0.98px;color:#3db35b;">RECEIVABLE</div>
<div class="t" style="left:196.2px;top:1447.1px;font-size:20px;font-weight:700;letter-spacing:0.9px;color:#212529;">RWF 601,000,039.15</div>
<div class="t" style="left:735.8px;top:1400.9px;font-size:24px;font-weight:700;letter-spacing:0.72px;color:#4aa7dc;">PAYABLE</div>
<div class="t" style="left:736.8px;top:1447.1px;font-size:20px;font-weight:700;letter-spacing:0.31px;color:#212529;">RWF 1,175,825.01</div>
<div class="t" style="left:1016px;top:1400.7px;font-size:21.5px;letter-spacing:0.78px;color:#333;">From <b>12/01/2023</b> to <b>12/01/2024</b></div>
<div class="a" style="left:1016px;top:1445.5px;width:713px;height:1.5px;background:#e6e8eb"></div>
<div class="t" style="left:1016px;top:1478.2px;font-size:21.5px;letter-spacing:0.76px;color:#333;">Number of Invoices per month ~ <span style="position:relative;top:-2.5px;font-size:23px;line-height:0;letter-spacing:0">→</span> <b>50</b></div>
<div class="t" style="left:1017px;top:1535.7px;font-size:21.5px;letter-spacing:0.7px;color:#333;">Average Invoiced Amount per month <span style="position:relative;top:-2.5px;font-size:23px;line-height:0;letter-spacing:0">→</span> <b style="letter-spacing:-0.45px">RWF 120,611,133.85</b></div>
<div class="t" style="left:1838px;top:386.2px;font-size:21.5px;letter-spacing:0.96px;color:#333;">Top customers in the last 3 months, based on invoiced amount</div>
<div class="a" style="left:1835px;top:436px;width:700px;height:329px;overflow:hidden">
<div class="a" style="left:4px;top:3.4px;width:378.5px;height:92.0px;background:#f0f3f6"></div>
<div class="a" style="left:389.4000000000001px;top:3.4px;width:305.0px;height:92.0px;background:#f0f3f6"></div>
<div class="a" style="left:4px;top:102.6px;width:285.8px;height:92.4px;background:#f0f3f6"></div>
<div class="a" style="left:297.5px;top:102.6px;width:396.9px;height:92.4px;background:#f0f3f6"></div>
<div class="a" style="left:4px;top:202.9px;width:690.4px;height:90.9px;background:#f0f3f6"></div>
<div class="a" style="left:4px;top:301.0px;width:339.8px;height:63.0px;background:#f0f3f6"></div>
<div class="a" style="left:350.6999999999998px;top:301.0px;width:343.7px;height:63.0px;background:#f0f3f6"></div>
</div>
<div class="a" style="left:2533px;top:436px;width:18px;height:329px;background:#dcdfe2;border-radius:9px"></div>
<div class="a" style="left:2533px;top:436px;width:18px;height:108px;background:#899198;border-radius:9px"></div>
<div class="t" style="left:1869.8px;top:476.4px;font-size:20px;font-weight:700;letter-spacing:0.12px;color:#212529;">KLAXYCOM</div>
<div class="t" style="left:2022px;top:476.4px;font-size:20px;letter-spacing:1.13px;color:#333;">RWF 32,000,000</div>
<div class="t" style="left:2254.3px;top:476.4px;font-size:20px;font-weight:700;letter-spacing:0.12px;color:#212529;">RDB</div>
<div class="t" style="left:2334px;top:476.4px;font-size:20px;letter-spacing:1.13px;color:#333;">RWF 26,500,000</div>
<div class="t" style="left:1869.8px;top:575.7px;font-size:20px;font-weight:700;letter-spacing:0.12px;color:#212529;">UR</div>
<div class="t" style="left:1937px;top:575.7px;font-size:20px;letter-spacing:0.62px;color:#333;">RWF 20,180,000</div>
<div class="t" style="left:2162.3px;top:575.7px;font-size:20px;font-weight:700;letter-spacing:0.52px;color:#212529;">KAPP MICRO.</div>
<div class="t" style="left:2338px;top:575.7px;font-size:20px;letter-spacing:0.82px;color:#333;">RWF 18,000,000</div>
<div class="t" style="left:1869.8px;top:675.0px;font-size:20px;font-weight:700;letter-spacing:0.97px;color:#212529;">MINECOFIN/SPIU</div>
<div class="t" style="left:2334px;top:675.0px;font-size:20px;letter-spacing:1.13px;color:#333;">RWF 22,600,000</div>
<div class="t" style="left:1838px;top:951.2px;font-size:21.5px;letter-spacing:0.68px;color:#333;">Transactions this week (from 07/01/2024 to 12/01/2024)</div>
<div class="a" style="left:2164.5px;top:1001px;width:2px;height:253px;background:#eef0f2"></div>
<div class="a" style="left:2517.5px;top:1001px;width:2px;height:253px;background:#eef0f2"></div>
<div class="a" style="left:2101.7px;top:1255px;width:2px;height:250px;background:#eef0f2"></div>
<div class="a" style="left:2299.5px;top:1255px;width:2px;height:250px;background:#eef0f2"></div>
<div class="a" style="left:1837.4px;top:1001px;width:295.1px;height:57.0px;background:#f5f6f8;border:1px solid #e1e4e7;border-radius:4px"></div>
<div class="t" style="left:1853.0px;top:1019.3px;font-size:21px;font-weight:700;letter-spacing:0.48px;color:#212529;">Credit Card(RWF)</div>
<div class="t" style="left:1838.0px;top:1078.7px;font-size:19px;letter-spacing:0.3px;color:#47b168;">IN</div>
<div class="t" style="left:1837.0px;top:1109.5px;font-size:21px;font-weight:700;letter-spacing:1.03px;color:#212529;">RWF 200,000</div>
<div class="a" style="left:1838.0px;top:1161.5px;width:294.5px;height:1.5px;background:#e6e8eb"></div>
<div class="t" style="left:1838.0px;top:1194.6px;font-size:19px;letter-spacing:0.45px;color:#db6d85;">OUT</div>
<div class="t" style="left:1837.0px;top:1225.7px;font-size:21px;font-weight:700;letter-spacing:0.57px;color:#212529;">RWF0</div>
<div class="a" style="left:2197px;top:1001px;width:290.0px;height:57.0px;background:#f5f6f8;border:1px solid #e1e4e7;border-radius:4px"></div>
<div class="t" style="left:2212.6px;top:1019.3px;font-size:21px;font-weight:700;letter-spacing:0.39px;color:#212529;">Credit Card(USD)</div>
<div class="t" style="left:2197.6px;top:1078.7px;font-size:19px;letter-spacing:0.3px;color:#47b168;">IN</div>
<div class="t" style="left:2196.6px;top:1109.5px;font-size:21px;font-weight:700;letter-spacing:1.45px;color:#212529;">$6,500</div>
<div class="a" style="left:2197.6px;top:1161.5px;width:289.4px;height:1.5px;background:#e6e8eb"></div>
<div class="t" style="left:2197.6px;top:1194.6px;font-size:19px;letter-spacing:0.45px;color:#db6d85;">OUT</div>
<div class="t" style="left:2196.6px;top:1225.7px;font-size:21px;font-weight:700;letter-spacing:0.15px;color:#212529;">USD0</div>
<div class="a" style="left:1837.4px;top:1254px;width:233.2px;height:56.4px;background:#f5f6f8;border:1px solid #e1e4e7;border-radius:4px"></div>
<div class="t" style="left:1852.8000000000002px;top:1272.5px;font-size:21px;font-weight:700;letter-spacing:0.43px;color:#212529;">Mobile Money</div>
<div class="t" style="left:1838.0px;top:1330.7px;font-size:19px;letter-spacing:0.3px;color:#47b168;">IN</div>
<div class="t" style="left:1836.5px;top:1362.5px;font-size:21px;font-weight:700;letter-spacing:0.59px;color:#212529;">RWF0</div>
<div class="a" style="left:1838.0px;top:1413.5px;width:232.6px;height:1.5px;background:#e6e8eb"></div>
<div class="t" style="left:1838.0px;top:1446.6px;font-size:19px;letter-spacing:0.45px;color:#db6d85;">OUT</div>
<div class="t" style="left:1836.5px;top:1479.3px;font-size:21px;font-weight:700;letter-spacing:0.62px;color:#212529;">RWF0</div>
<div class="a" style="left:2135.8px;top:1254px;width:132.9px;height:56.4px;background:#f5f6f8;border:1px solid #e1e4e7;border-radius:4px"></div>
<div class="t" style="left:2151.2000000000003px;top:1272.5px;font-size:21px;font-weight:700;letter-spacing:-0.43px;color:#212529;">USD</div>
<div class="t" style="left:2136.4px;top:1330.7px;font-size:19px;letter-spacing:0.3px;color:#47b168;">IN</div>
<div class="t" style="left:2134.9px;top:1362.5px;font-size:21px;font-weight:700;letter-spacing:0.17px;color:#212529;">USD0</div>
<div class="a" style="left:2136.4px;top:1413.5px;width:132.3px;height:1.5px;background:#e6e8eb"></div>
<div class="t" style="left:2136.4px;top:1446.6px;font-size:19px;letter-spacing:0.45px;color:#db6d85;">OUT</div>
<div class="t" style="left:2134.9px;top:1479.3px;font-size:21px;font-weight:700;letter-spacing:0.2px;color:#212529;">USD0</div>
<div class="a" style="left:2333px;top:1254px;width:218.0px;height:56.4px;background:#f5f6f8;border:1px solid #e1e4e7;border-radius:4px"></div>
<div class="t" style="left:2348.4px;top:1272.5px;font-size:21px;font-weight:700;letter-spacing:-0.13px;color:#212529;">RWF</div>
<div class="t" style="left:2333.6px;top:1330.7px;font-size:19px;letter-spacing:0.3px;color:#47b168;">IN</div>
<div class="t" style="left:2332.1px;top:1362.5px;font-size:21px;font-weight:700;letter-spacing:0.29000000000000004px;color:#212529;">RWF10,654,180</div>
<div class="a" style="left:2333.6px;top:1413.5px;width:217.4px;height:1.5px;background:#e6e8eb"></div>
<div class="t" style="left:2333.6px;top:1446.6px;font-size:19px;letter-spacing:0.45px;color:#db6d85;">OUT</div>
<div class="t" style="left:2332.1px;top:1479.3px;font-size:21px;font-weight:700;letter-spacing:0.77px;color:#212529;">RWF10,349,580</div>
<svg style="left:0;top:0" width="2615" height="1579" viewBox="0 0 2615 1579" fill="none">
<g transform="translate(0.0,0.0)" stroke="#47b168" stroke-width="1.6"><path d="M1877.3 1085.6 L1867.6 1095 M1866.6 1088.3 V1095.4 H1874.4"/><rect x="1879.6" y="1076.6" width="6.6" height="6.6" rx="0.8"/></g>
<g transform="translate(0.0,0.0)" stroke="#db6d85" stroke-width="1.5"><path d="M1890.4 1202.8 L1899.7 1193.5 M1893 1193 H1900 V1200.3"/><rect x="1881.6" y="1206.3" width="5.8" height="6" rx="0.6"/></g>
<g transform="translate(359.6,0.0)" stroke="#47b168" stroke-width="1.6"><path d="M1877.3 1085.6 L1867.6 1095 M1866.6 1088.3 V1095.4 H1874.4"/><rect x="1879.6" y="1076.6" width="6.6" height="6.6" rx="0.8"/></g>
<g transform="translate(359.6,0.0)" stroke="#db6d85" stroke-width="1.5"><path d="M1890.4 1202.8 L1899.7 1193.5 M1893 1193 H1900 V1200.3"/><rect x="1881.6" y="1206.3" width="5.8" height="6" rx="0.6"/></g>
<g transform="translate(0.0,252.0)" stroke="#47b168" stroke-width="1.6"><path d="M1877.3 1085.6 L1867.6 1095 M1866.6 1088.3 V1095.4 H1874.4"/><rect x="1879.6" y="1076.6" width="6.6" height="6.6" rx="0.8"/></g>
<g transform="translate(0.0,252.0)" stroke="#db6d85" stroke-width="1.5"><path d="M1890.4 1202.8 L1899.7 1193.5 M1893 1193 H1900 V1200.3"/><rect x="1881.6" y="1206.3" width="5.8" height="6" rx="0.6"/></g>
<g transform="translate(298.4,252.0)" stroke="#47b168" stroke-width="1.6"><path d="M1877.3 1085.6 L1867.6 1095 M1866.6 1088.3 V1095.4 H1874.4"/><rect x="1879.6" y="1076.6" width="6.6" height="6.6" rx="0.8"/></g>
<g transform="translate(298.4,252.0)" stroke="#db6d85" stroke-width="1.5"><path d="M1890.4 1202.8 L1899.7 1193.5 M1893 1193 H1900 V1200.3"/><rect x="1881.6" y="1206.3" width="5.8" height="6" rx="0.6"/></g>
<g transform="translate(495.6,252.0)" stroke="#47b168" stroke-width="1.6"><path d="M1877.3 1085.6 L1867.6 1095 M1866.6 1088.3 V1095.4 H1874.4"/><rect x="1879.6" y="1076.6" width="6.6" height="6.6" rx="0.8"/></g>
<g transform="translate(495.6,252.0)" stroke="#db6d85" stroke-width="1.5"><path d="M1890.4 1202.8 L1899.7 1193.5 M1893 1193 H1900 V1200.3"/><rect x="1881.6" y="1206.3" width="5.8" height="6" rx="0.6"/></g>
</svg>
<!-- /RIGHT-CONTENT -->
</body></html>
